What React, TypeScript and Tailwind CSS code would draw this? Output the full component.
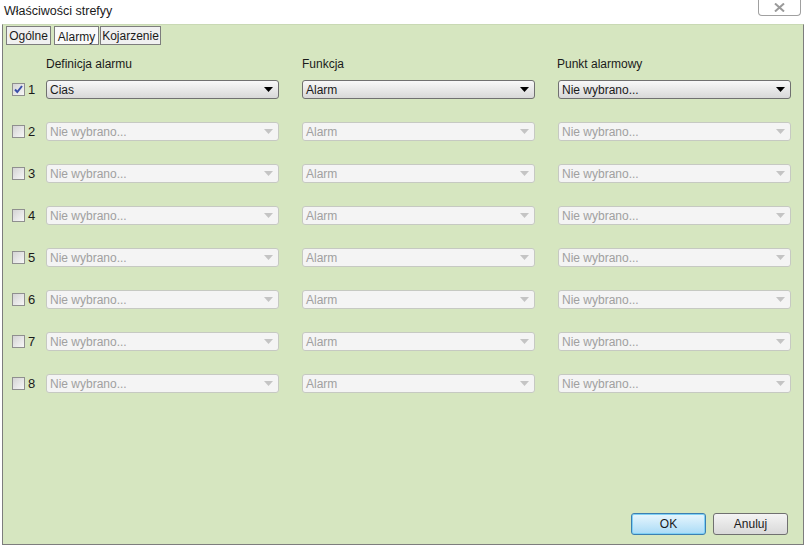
import React from "react";

const rows = [1, 2, 3, 4, 5, 6, 7, 8];

function Arrow({ disabled }: { disabled?: boolean }) {
  return (
    <svg width="9" height="5" viewBox="0 0 9 5" className="shrink-0">
      <path d="M0 0h9L4.5 5z" fill={disabled ? "#c4c4c4" : "#000"} />
    </svg>
  );
}

function Select({ value, disabled }: { value: string; disabled?: boolean }) {
  return (
    <div
      className={
        disabled
          ? "flex h-[19px] w-[233px] items-center justify-between rounded-[3px] border border-[#c6c9c2] bg-[#f4f4f4] pl-[3px] pr-[5px] text-[#a0a0a0]"
          : "flex h-[19px] w-[233px] items-center justify-between rounded-[3px] border border-[#707070] bg-gradient-to-b from-[#f8f8f8] to-[#d8d8d8] pl-[3px] pr-[5px] text-[#1a1a1a]"
      }
    >
      <span>{value}</span>
      <Arrow disabled={disabled} />
    </div>
  );
}

function Check({ checked }: { checked?: boolean }) {
  return (
    <div className="flex h-[13px] w-[13px] items-center justify-center border border-[#8f8f8f] bg-gradient-to-br from-[#d4d4d4] to-[#f7f7f7]">
      {checked && (
        <svg width="9" height="9" viewBox="0 0 9 9">
          <path d="M1 4.5l2.3 2.5L8 1" stroke="#3a4fa8" strokeWidth="2" fill="none" />
        </svg>
      )}
    </div>
  );
}

export default function App() {
  return (
    <div
      className="relative h-[548px] w-[806px] bg-white text-[12px] leading-none text-[#1a1a1a]"
      style={{ fontFamily: '"Liberation Sans", Arial, sans-serif' }}
    >
      {/* title bar */}
      <div className="flex h-[20px] items-start justify-between">
        <div className="pl-[4px] pt-[5px] text-[12.5px]">Właściwości strefyy</div>
        <div className="mr-[5px] flex h-[16px] w-[43px] items-center justify-center rounded-b-[4px] border border-t-0 border-[#a0a0a0] bg-white">
          <svg width="11" height="9" viewBox="0 0 11 9">
            <path d="M1 0.5l9 8M10 0.5l-9 8" stroke="#9a9a9a" strokeWidth="2" fill="none" />
          </svg>
        </div>
      </div>

      {/* tabs + panel */}
      <div className="relative mx-[2px] mt-[4px] h-[521px] border border-t-[#c9d9b4] border-[#7d7d7d] bg-[#d6e6c0]">
        <div className="absolute left-[3px] top-[1px] flex">
          <div className="flex h-[19px] w-[45px] items-center justify-center border border-[#7d7d7d] bg-[#f0f0f0]">Ogólne</div>
          <div className="ml-[3px] flex h-[19px] w-[45px] items-center justify-center border border-[#7d7d7d] bg-[#fafafa] pt-[2px]">Alarmy</div>
          <div className="ml-[1px] flex h-[19px] w-[61px] items-center justify-center border border-[#7d7d7d] bg-[#f0f0f0]">Kojarzenie</div>
        </div>

        <div className="pl-[9px] pt-[33px]">
          <div className="flex pl-[34px]">
            <div className="w-[256px]">Definicja alarmu</div>
            <div className="w-[255px]">Funkcja</div>
            <div>Punkt alarmowy</div>
          </div>
          <div className="mt-[10px] flex flex-col gap-[23px]">
            {rows.map((n) => (
              <div key={n} className="flex h-[19px] items-center">
                <Check checked={n === 1} />
                <span className="ml-[3px] w-[18px] text-[13px]">{n}</span>
                <div className="flex gap-[23px]">
                  <Select value={n === 1 ? "Cias" : "Nie wybrano..."} disabled={n !== 1} />
                  <Select value="Alarm" disabled={n !== 1} />
                  <Select value="Nie wybrano..." disabled={n !== 1} />
                </div>
              </div>
            ))}
          </div>
        </div>

        <div className="absolute bottom-[9px] right-[15px] flex gap-[7px]">
          <button className="h-[22px] w-[75px] rounded-[3px] border border-[#3c7fb1] bg-gradient-to-b from-[#e8f6fd] to-[#a9dbf6] shadow-[inset_0_0_0_1px_#7fd0f5]">
            OK
          </button>
          <button className="h-[22px] w-[75px] rounded-[3px] border border-[#707070] bg-gradient-to-b from-[#f4f4f4] to-[#d9d9d9]">
            Anuluj
          </button>
        </div>
      </div>
    </div>
  );
}
